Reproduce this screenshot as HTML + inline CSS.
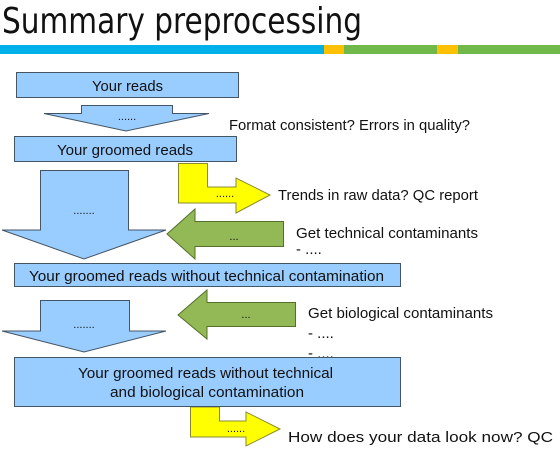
<!DOCTYPE html>
<html><head><meta charset="utf-8"><style>
html,body{margin:0;padding:0;background:#fff;width:560px;height:449px;overflow:hidden}
svg{display:block;font-family:"Liberation Sans","DejaVu Sans",sans-serif}
</style></head><body>
<svg width="560" height="449" viewBox="0 0 560 449" xmlns="http://www.w3.org/2000/svg">
<text x="2" y="33" font-size="36" fill="#111" font-family="DejaVu Sans, sans-serif" textLength="360" lengthAdjust="spacingAndGlyphs">Summary preprocessing</text>
<rect x="0" y="45" width="324" height="9" fill="#00b0e8"/>
<rect x="324" y="45" width="20" height="9" fill="#ffc000"/>
<rect x="344" y="45" width="93" height="9" fill="#70b84a"/>
<rect x="437" y="45" width="21" height="9" fill="#ffc000"/>
<rect x="458" y="45" width="102" height="9" fill="#70b84a"/>
<g font-family="Liberation Sans, sans-serif" font-size="15" fill="#111" lengthAdjust="spacingAndGlyphs">
<g stroke="#445566" stroke-width="1" fill="#99ccff">
<rect x="16.5" y="72.5" width="222" height="25"/>
<polygon points="81.5,105.5 172.5,105.5 172.5,113.5 209,113.5 126,131 44,113.5 81.5,113.5"/>
<rect x="14.5" y="136.5" width="222" height="25"/>
<polygon points="40.5,170.5 128.5,170.5 128.5,230 166,230 84,259 2,230 40.5,230"/>
<rect x="14.5" y="263.5" width="386" height="23"/>
<polygon points="40.5,300.5 129.5,300.5 129.5,331 166,331 84,352 2,331 40.5,331"/>
</g>
<g stroke="#888833" stroke-width="1" fill="#ffff00">
<polygon points="178.5,163.5 207.5,163.5 207.5,187 236,187 236,178 270,195 236,213 236,203 178.5,203"/>
<polygon points="190.5,407 219.5,407 219.5,421 246,421 246,412 280,429 246,446 246,437 190.5,437"/>
</g>
<g stroke="#55702a" stroke-width="1" fill="#93b856">
<polygon points="283.5,221.5 195,221.5 195,209 167,234 195,259 195,246.5 283.5,246.5"/>
<polygon points="295.5,302.5 207,302.5 207,290 178,315 207,339 207,326.5 295.5,326.5"/>
</g>
<text x="92" y="91" textLength="71" lengthAdjust="spacingAndGlyphs">Your reads</text>
<text x="127" y="120" text-anchor="middle" font-size="11">......</text>
<text x="229" y="130" textLength="241" lengthAdjust="spacingAndGlyphs">Format consistent? Errors in quality?</text>
<text x="57" y="155" textLength="136" lengthAdjust="spacingAndGlyphs">Your groomed reads</text>
<text x="225" y="197" text-anchor="middle" font-size="11">......</text>
<text x="278" y="200" textLength="200" lengthAdjust="spacingAndGlyphs">Trends in raw data? QC report</text>
<text x="84" y="214" text-anchor="middle" font-size="11">.......</text>
<text x="234" y="240" text-anchor="middle" font-size="11">...</text>
<text x="296" y="238" textLength="182" lengthAdjust="spacingAndGlyphs">Get technical contaminants</text>
<text x="296" y="254">- ....</text>
<text x="29" y="281" textLength="355" lengthAdjust="spacingAndGlyphs">Your groomed reads without technical contamination</text>
<text x="84" y="328" text-anchor="middle" font-size="11">.......</text>
<text x="246" y="318" text-anchor="middle" font-size="11">...</text>
<text x="308" y="318" textLength="185" lengthAdjust="spacingAndGlyphs">Get biological contaminants</text>
<text x="308" y="338">- ....</text>
<text x="308" y="358">- ....</text>
<rect x="14.5" y="357.5" width="386" height="49" fill="#99ccff" stroke="#445566"/>
<text x="78" y="378" textLength="255" lengthAdjust="spacingAndGlyphs">Your groomed reads without technical</text>
<text x="110" y="397" textLength="194" lengthAdjust="spacingAndGlyphs">and biological contamination</text>
<text x="236" y="432" text-anchor="middle" font-size="11">......</text>
<text x="288" y="442" textLength="265" lengthAdjust="spacingAndGlyphs">How does your data look now? QC</text>
</g>
</svg>
</body></html>
